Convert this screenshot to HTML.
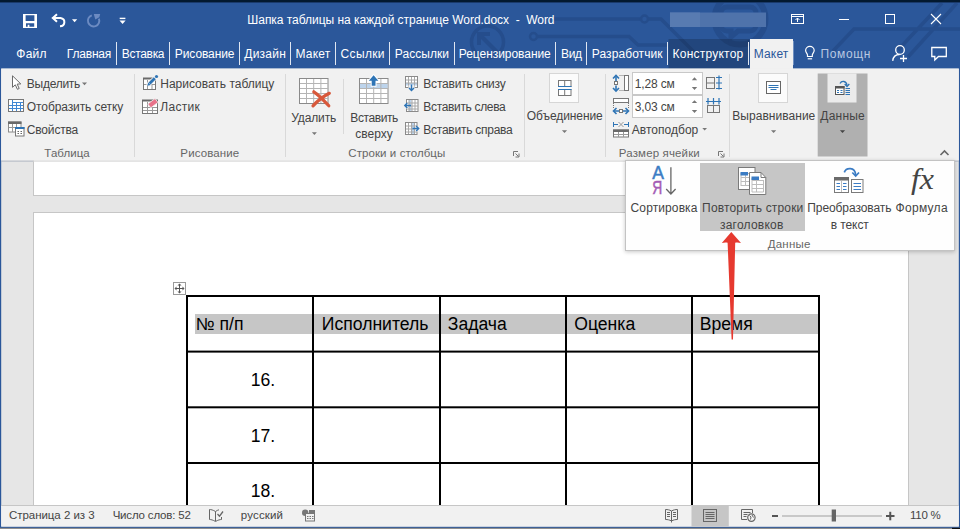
<!DOCTYPE html>
<html lang="ru"><head><meta charset="utf-8"><title>Word</title>
<style>
html,body{margin:0;padding:0;background:#2b579a;}
#w{position:relative;width:960px;height:529px;overflow:hidden;background:#2b579a;font-family:"Liberation Sans",sans-serif;}
#w svg{position:absolute;left:0;top:0;}
#panel{position:absolute;left:625px;top:160.400px;width:328px;height:89px;background:#fefefe;border:1px solid #c3c3c3;box-shadow:0 1px 4px rgba(0,0,0,0.22);}
#hl{position:absolute;left:74.400px;top:1.200px;width:104.800px;height:68px;background:#c6c6c6;}
.t{position:absolute;white-space:pre;font-size:12px;line-height:20px;}
</style></head><body>
<div id="w">
<svg width="960" height="529" viewBox="0 0 960 529">
<!-- title pattern -->
<g fill="none" stroke="#254d8c" stroke-width="3.5">
<circle cx="487.5" cy="42" r="16"/>
<path d="M497 52 L480 35 M479 45 V34 H490" stroke-width="4"/>
<path d="M554 19 H640"/><circle cx="644.5" cy="19" r="3.5" stroke-width="2.5"/>
<circle cx="533.5" cy="36.5" r="3.5" stroke-width="2.5"/><path d="M538 36.500 H629 L638 45 H668"/>
<circle cx="740" cy="19" r="25.500" stroke-width="6"/>
<path d="M727 7H750A6 6 0 0 1 756 13V25A6 6 0 0 1 750 31H738L731 37V31H727A6 6 0 0 1 721 25V13A6 6 0 0 1 727 7Z" stroke-width="5"/>
<path d="M648 19H661L699 57" stroke-width="3.500"/>
<path d="M833 51 L854 29 H960 M898 50 L942 3 M908 57 L957 3"/>
</g>
<!-- top strip -->
<rect x="0" y="0" width="960" height="2" fill="#03192f"/>
<rect x="0" y="2" width="960" height="1" fill="#1a3a6b"/>
<!-- blurred user name -->
<rect x="670" y="12.500" width="96" height="14.500" fill="#4f73ab"/><rect x="670" y="12.500" width="30" height="14.500" fill="#587bb1"/>
<!-- konstruktor tab -->
<rect x="668.500" y="39" width="81" height="30" fill="#000" fill-opacity="0.19"/>
<!-- tab separators -->
<g fill="#dfe6f1">
<rect x="116" y="42" width="1" height="23"/><rect x="169" y="42" width="1" height="23"/><rect x="239" y="42" width="1" height="23"/>
<rect x="290" y="42" width="1" height="23"/><rect x="335" y="42" width="1" height="23"/><rect x="389" y="42" width="1" height="23"/>
<rect x="454" y="42" width="1" height="23"/><rect x="555" y="42" width="1" height="23"/><rect x="586" y="42" width="1" height="23"/>
<rect x="667" y="42" width="1" height="23"/><rect x="748" y="42" width="1" height="23"/>
</g>
<!-- active tab -->
<rect x="750" y="39" width="43" height="31" fill="#f1f1f1"/><rect x="793" y="41" width="1" height="24" fill="#6f8fc0"/>
<!-- ribbon -->
<rect x="1.200" y="68.600" width="957.600" height="92" fill="#f1f1f1"/>
<rect x="1.200" y="160.600" width="957.600" height="1" fill="#d2d2d2"/>
<!-- doc -->
<rect x="1.200" y="161.600" width="957.600" height="345" fill="#e6e6e6"/>
<rect x="33.500" y="150" width="875" height="45.500" fill="#fff" stroke="#c6c6c6"/>
<rect x="33.500" y="212.500" width="875" height="300" fill="#fff" stroke="#c6c6c6"/>
<rect x="1.200" y="68.600" width="957.600" height="92" fill="#f1f1f1"/>
<rect x="1.200" y="160.600" width="957.600" height="1" fill="#d2d2d2"/>
<!-- status -->
<rect x="1.200" y="505" width="957.600" height="1" fill="#c6c6c6"/>
<rect x="1.200" y="506" width="957.600" height="20.500" fill="#f1f1f1"/>
<rect x="0" y="527.800" width="960" height="1.200" fill="#8e8e8e"/><rect x="952" y="527.800" width="8" height="1.200" fill="#111"/>
<!-- ===== table ===== -->
<g fill="#c6c6c6">
<rect x="195" y="314" width="117" height="20"/><rect x="314" y="314" width="125" height="20"/><rect x="441" y="314" width="124" height="20"/><rect x="567" y="314" width="124" height="20"/><rect x="693" y="314" width="125" height="20"/>
</g>
<g fill="#000">
<rect x="186" y="295" width="2" height="211"/><rect x="312" y="295" width="2" height="211"/><rect x="439" y="295" width="2" height="211"/><rect x="565" y="295" width="2" height="211"/><rect x="691" y="295" width="2" height="211"/><rect x="818" y="295" width="2" height="211"/>
<rect x="186" y="295" width="634" height="2"/><rect x="186" y="350.600" width="634" height="2"/><rect x="186" y="406.300" width="634" height="2"/><rect x="186" y="462" width="634" height="2"/>
</g>
<rect x="173.500" y="282.500" width="12" height="12" fill="#fff" stroke="#9a9a9a"/>
<path d="M175.500 288.500H183.500M179.500 284.500V292.500" stroke="#555" stroke-width="1" fill="none"/>
<path d="M174.500 288.500l2-2v4zM184.500 288.500l-2-2v4zM179.500 283.500l-2 2h4zM179.500 293.500l-2-2h4z" fill="#555"/>
<!-- status bar redraw over table -->
<rect x="1.200" y="505" width="957.600" height="1" fill="#c6c6c6"/>
<rect x="1.200" y="506" width="957.600" height="20.600" fill="#f1f1f1"/>
<rect x="691.500" y="506" width="37.300" height="20.600" fill="#c6c6c6"/>
<!-- ===== data button ===== -->
<rect x="817.700" y="73.500" width="49.800" height="83" fill="#b0b0b0"/>
<rect x="827.500" y="73.500" width="29" height="29" fill="#ebebeb"/>
<!-- big button boxes -->
<rect x="549.500" y="73.500" width="29" height="29" fill="#fbfbfb" stroke="#d6d6d6"/>
<rect x="758.500" y="73.500" width="29" height="29" fill="#fbfbfb" stroke="#d6d6d6"/>
<!-- inputs -->
<rect x="632.500" y="72.500" width="70" height="22" fill="#fff" stroke="#c8c8c8"/>
<rect x="632.500" y="95.500" width="70" height="22" fill="#fff" stroke="#c8c8c8"/>
<!-- group separators -->
<g fill="#d9d9d9">
<rect x="134" y="74" width="1" height="83"/><rect x="285" y="74" width="1" height="83"/><rect x="524" y="74" width="1" height="83"/><rect x="605" y="74" width="1" height="83"/><rect x="729" y="74" width="1" height="83"/>
<rect x="343" y="79" width="1" height="55"/>
</g>
<!-- ===== QAT ===== -->
<path fill="#fff" fill-rule="evenodd" d="M23 14H37V28H23Z M25.600 15.200V21H34.400V15.200Z M26 23.300V26.800H27.700V24.800H29.400V26.800H34.200V23.300Z"/>
<g fill="none" stroke="#fff" stroke-width="2" stroke-linecap="butt" stroke-linejoin="miter">
<path d="M57 14.200L52.800 18L57 21.800"/>
<path d="M53 18H60.500A4.800 4.200 0 0 1 60 26.300"/>
</g>
<path d="M72 19.200H77.200L74.600 22.200Z" fill="#fff"/>
<path d="M91.800 15.300A5.700 5.700 0 1 0 98.900 18.600" fill="none" stroke="#6c8bc2" stroke-width="1.900"/>
<path d="M93.800 13.900H100.200L99.300 17.200L95.300 19.600Z" fill="#6c8bc2"/>
<rect x="119.700" y="17.700" width="5.700" height="1.400" fill="#fff"/>
<path d="M119.500 20.600H125.600L122.550 24Z" fill="#fff"/>
<!-- window controls -->
<g fill="none" stroke="#fff" stroke-width="1">
<rect x="791.500" y="14.500" width="12" height="9"/>
<path d="M791.500 16.500H803.500M797.500 22V18M795.500 20L797.500 18L799.500 20"/>
<path d="M839 19.500H849"/>
<rect x="885.500" y="14.500" width="9" height="9"/>
<path d="M931 14L941 24M941 14L931 24" stroke-width="1.100"/>
</g>
<!-- bulb -->
<g fill="none" stroke="#fff" stroke-width="1.200">
<path d="M807.500 56.500V55C807.500 53.500 805.600 52.600 805.600 50.600A4.300 4.300 0 0 1 814.200 50.600C814.200 52.600 812.300 53.500 812.300 55V56.500Z"/>
<path d="M807.700 58.800H812.100"/>
</g>
<!-- person+ -->
<g fill="none" stroke="#fff" stroke-width="1.300">
<circle cx="900" cy="50" r="4.300"/>
<path d="M892.700 60.800C893.200 56.500 896 54.500 899.500 54.500"/>
<path d="M900 58.500H907M903.500 55V62"/>
</g>
<!-- comment -->
<path d="M931.800 47.500H946.300V56.500H938.500L934.800 60V56.500H931.800Z" fill="none" stroke="#fff" stroke-width="1.300"/>
<!-- ===== ribbon: Table group ===== -->
<path d="M12.500 75.800V87.300L15.300 84.800L17.400 89.300L19.200 88.500L17.200 84.100L20.800 83.900Z" fill="#fff" stroke="#6a6a6a" stroke-width="1"/>
<!-- view gridlines -->
<rect x="8.500" y="99.500" width="15" height="12" fill="#fff" stroke="#777"/>
<path d="M12.500 100V111M16.500 102V111M20.500 102V111M12.500 102.500H23M9 105.500H23M9 108.500H23" stroke="#3f87d3" stroke-width="1" fill="none"/>
<!-- properties -->
<rect x="8.500" y="122" width="12.500" height="10" fill="#fff" stroke="#8a8a8a"/>
<rect x="8" y="121.500" width="13.500" height="2.500" fill="#6a6a6a"/>
<path d="M12.500 124V132M16.500 124V132M9 127.500H21" stroke="#9a9a9a" fill="none"/>
<rect x="15.500" y="127.500" width="8.500" height="8.500" fill="#fff" stroke="#777"/>
<rect x="15" y="127" width="9.500" height="2" fill="#2e74b5"/>
<path d="M17.500 131.500H19M20.500 131.500H22M17.500 133.500H19M20.500 133.500H22" stroke="#666" fill="none"/>
<path d="M82 82.500H87L84.500 85.300Z" fill="#777"/>
<!-- draw table -->
<rect x="143.500" y="78.500" width="12" height="11" fill="#fff" stroke="#777"/>
<rect x="143" y="77.500" width="13" height="2" fill="#6a6a6a"/>
<path d="M147.500 80V89M152 84.500V89M144 84.500H155" stroke="#999" fill="none"/>
<path d="M147.500 85.500L156.500 76.500" stroke="#f1f1f1" stroke-width="4.500" fill="none"/>
<path d="M149.600 83.400L154.800 78.200" stroke="#2e74b5" stroke-width="2.800" fill="none"/><circle cx="156.500" cy="76.500" r="1.600" fill="#2e74b5"/>
<path d="M147.300 85.800l1-3.200l2.300 2.300z" fill="#2e74b5"/>
<!-- eraser -->
<rect x="142.500" y="100.500" width="15" height="13" fill="#fff" stroke="#777"/>
<rect x="142" y="99.500" width="16" height="2" fill="#6a6a6a"/>
<path d="M147.500 102V113M152.500 107V113M143 107.500H157M143 110.500H157" stroke="#999" fill="none"/>
<path d="M147.800 104L155 98.600L158 102.400L150.800 107.800Z" fill="#e8728a" stroke="#f1f1f1" stroke-width="0.800"/>
<!-- delete -->
<rect x="299.500" y="78.500" width="28.500" height="25" fill="#fff" stroke="#8a8a8a"/>
<path d="M306.500 79V103M313.700 79V103M320.900 79V103M300 83.500H328M300 88.500H328M300 93.500H328M300 98.500H328" stroke="#b4b4b4" fill="none"/>
<path d="M313.800 91.800C318 94.500 324 100.500 328.800 105.800M329.300 93.300C323 96.500 317.500 101 313 105.800" stroke="#d8583b" stroke-width="3.200" stroke-linecap="round" fill="none"/>
<path d="M311.900 132.300H316.900L314.400 135Z" fill="#777"/>
<!-- insert above -->
<rect x="359.500" y="78.500" width="28.500" height="25" fill="#fff" stroke="#8a8a8a"/>
<rect x="360" y="83.500" width="27.500" height="5" fill="#bdd4ec"/>
<path d="M366.500 79V103M373.700 79V103M380.900 79V103M360 83.500H388M360 88.500H388M360 93.500H388M360 98.500H388" stroke="#b4b4b4" fill="none"/>
<path d="M373.600 73.800L380.300 81.600H376.500V86.800H370.700V81.600H366.900Z" fill="#fff"/><path d="M373.600 75.200L378.400 80.700H375.500V85.800H371.700V80.700H368.800Z" fill="#2e74b5"/>
<!-- insert below (small) -->
<g fill="none">
<rect x="405.500" y="76.500" width="12" height="11" fill="#fff" stroke="#8a8a8a"/>
<rect x="406" y="83" width="11" height="2.500" fill="#bdd4ec"/>
<path d="M408.500 77V87M411.500 77V83M414.500 77V87M406 80H417M406 83H417" stroke="#a8a8a8"/>
<rect x="408.500" y="85.500" width="6" height="3" fill="#f1f1f1"/>
<path d="M411.500 84.500V90M409 88L411.500 90.500L414 88" stroke="#2e74b5" stroke-width="1.400"/>
<!-- insert left -->
<rect x="406.500" y="99.500" width="11.500" height="12" fill="#fff" stroke="#8a8a8a"/>
<rect x="409" y="100" width="2.500" height="11" fill="#bdd4ec"/>
<path d="M409 100V111M412 100V111M415 100V111M407 103H418M407 106H418M407 109H418" stroke="#a8a8a8"/>
<rect x="405" y="103" width="3" height="5.500" fill="#f1f1f1"/>
<path d="M411 105.500H404.800M407.300 103L404.800 105.500L407.300 108" stroke="#2e74b5" stroke-width="1.400"/>
<!-- insert right -->
<rect x="405.500" y="122.500" width="11.500" height="12" fill="#fff" stroke="#8a8a8a"/>
<rect x="411.500" y="123" width="2.500" height="11" fill="#bdd4ec"/>
<path d="M408.500 123V134M411.500 123V134M414.500 123V134M406 126H417M406 129H417M406 132H417" stroke="#a8a8a8"/>
<rect x="415.500" y="126" width="3" height="5.500" fill="#f1f1f1"/>
<path d="M412.500 128.500H418.700M416.200 126L418.700 128.500L416.200 131" stroke="#2e74b5" stroke-width="1.400"/>
</g>
<!-- dialog launchers -->
<g fill="none" stroke="#777" stroke-width="1">
<path d="M513.500 156V151.500H518M515.500 153.500L518.500 156.500M519 153.500V157H515.500"/>
<path d="M718.500 156V151.500H723M720.500 153.500L723.500 156.500M724 153.500V157H720.500"/>
</g>
<!-- merge icon -->
<g fill="none">
<rect x="558.500" y="80.500" width="12.500" height="6" fill="#fff" stroke="#777"/>
<rect x="558.500" y="89.500" width="12.500" height="6" fill="#fff" stroke="#777"/>
<path d="M564.700 81V86M564.700 90V95" stroke="#777"/>
<path d="M558 86.500H571.500M558 89.500H571.500" stroke="#2e74b5"/>
</g>
<path d="M561.900 130.300H567.100L564.500 133Z" fill="#777"/>
<!-- height icon -->
<g fill="none">
<path d="M616 76.500V81M616 85.500V90.500" stroke="#2e74b5" stroke-width="1.600"/>
<path d="M613 78.500L616 75.500L619 78.500M613 88L616 91L619 88" stroke="#2e74b5" stroke-width="1.600"/>
<rect x="614.500" y="81.500" width="3" height="3" stroke="#777" fill="#fff"/>
<path d="M619.500 75.500H625M619.500 90.500H625" stroke="#777" stroke-dasharray="1 1"/>
<rect x="624.500" y="75.500" width="4" height="15" fill="#fff" stroke="#777"/>
<!-- width icon -->
<rect x="613.500" y="98.500" width="15" height="4" fill="#fff" stroke="#777"/>
<path d="M613.500 103V109M628.500 103V109" stroke="#777" stroke-dasharray="1 1"/>
<path d="M614 111H619M623 111H628" stroke="#2e74b5" stroke-width="1.600"/>
<path d="M616.500 108L613.500 111L616.500 114M625.500 108L628.500 111L625.500 114" stroke="#2e74b5" stroke-width="1.600"/>
<rect x="619.500" y="109.500" width="3" height="3" stroke="#777" fill="#fff"/>
<!-- autofit -->
<path d="M613.500 122V127M628.500 122V127M613.500 124.500H618M624 124.500H628.500" stroke="#2e74b5"/>
<path d="M618.500 122L623.500 127M623.500 122L618.500 127" stroke="#999"/>
<rect x="613.500" y="130" width="15" height="7" fill="#fff" stroke="#777"/>
<rect x="613" y="129.500" width="16" height="2.500" fill="#6a6a6a"/>
<path d="M618.500 132V137M623.500 132V137M614 134.500H628" stroke="#999"/>
</g>
<!-- spinners -->
<g fill="#777">
<path d="M691.800 80.200H697.200L694.500 77.300Z"/><path d="M691.800 87H697.200L694.500 89.900Z"/>
<path d="M691.800 103.100H697.200L694.500 100.200Z"/><path d="M691.800 110H697.200L694.500 112.900Z"/>
<path d="M702.300 128H707L704.650 130.500Z"/>
</g>
<!-- distribute rows -->
<g fill="none">
<rect x="706.500" y="77.500" width="8" height="11" stroke="#777"/><path d="M707 83H714" stroke="#777"/>
<path d="M719 75.500V89.500M716 77.500H722M716 83H722M716 88.500H722" stroke="#2e74b5" stroke-width="1.200"/>
<!-- distribute cols -->
<rect x="707.500" y="105.500" width="12" height="7" stroke="#777"/><path d="M713.500 106V112" stroke="#777"/>
<path d="M706 101.500H721M708 98V104.500M713.500 98V104.500M719 98V104.500" stroke="#2e74b5" stroke-width="1.200"/>
</g>
<!-- align icon -->
<rect x="766.500" y="81.500" width="14" height="12" fill="#fff" stroke="#666"/>
<path d="M768.500 85.500H778.500M768.500 87.500H778.500M770.500 89.500H776.500" stroke="#2e74b5" fill="none"/>
<path d="M771 130.300H776.200L773.600 133Z" fill="#777"/>
<!-- data icon -->
<g fill="none">
<rect x="835.500" y="86.500" width="8.500" height="8" fill="#fff" stroke="#555"/>
<rect x="835" y="86" width="9.500" height="2.500" fill="#555"/>
<path d="M837 90.500H839M840.500 90.500H842.500M837 92.500H839M840.500 92.500H842.500" stroke="#2e74b5"/>
<path d="M845.500 88.500H850M845.500 90.500H850M845.500 92.500H850M845.500 94.500H850" stroke="#2e74b5"/>
<path d="M840 83.500C841.500 80.500 846.500 80.500 847 85.500" stroke="#2e74b5" stroke-width="1.300"/>
<path d="M844.700 84L847 86.500L849.300 84" stroke="#2e74b5" stroke-width="1.300"/>
</g>
<path d="M839.900 130.300H845.100L842.500 133Z" fill="#444"/>
<!-- collapse chevron -->
<path d="M940.500 155L944.500 151L948.500 155" fill="none" stroke="#666" stroke-width="1.600"/>

</svg>
<div id="panel"><div id="hl"></div></div>
<span class="t" style="left:247.30px;top:9.84px;color:#ffffff;letter-spacing:-0.035px">Шапка таблицы на каждой странице Word.docx  -  Word</span>
<span class="t" style="left:16.30px;top:43.84px;color:#ffffff;letter-spacing:0.245px">Файл</span>
<span class="t" style="left:66.80px;top:43.84px;color:#ffffff;letter-spacing:-0.198px">Главная</span>
<span class="t" style="left:121.80px;top:43.84px;color:#ffffff;letter-spacing:-0.310px">Вставка</span>
<span class="t" style="left:174.80px;top:43.84px;color:#ffffff;letter-spacing:-0.086px">Рисование</span>
<span class="t" style="left:244.30px;top:43.84px;color:#ffffff;letter-spacing:0.231px">Дизайн</span>
<span class="t" style="left:295.55px;top:43.84px;color:#ffffff;letter-spacing:0.195px">Макет</span>
<span class="t" style="left:340.55px;top:43.84px;color:#ffffff;letter-spacing:0.350px">Ссылки</span>
<span class="t" style="left:394.80px;top:43.84px;color:#ffffff;letter-spacing:0.056px">Рассылки</span>
<span class="t" style="left:458.80px;top:43.84px;color:#ffffff;letter-spacing:-0.052px">Рецензирование</span>
<span class="t" style="left:561.05px;top:43.84px;color:#ffffff;letter-spacing:-0.359px">Вид</span>
<span class="t" style="left:591.80px;top:43.84px;color:#ffffff;letter-spacing:0.077px">Разработчик</span>
<span class="t" style="left:672.55px;top:43.84px;color:#ffffff;letter-spacing:0.233px">Конструктор</span>
<span class="t" style="left:753.80px;top:43.84px;color:#2b579a;letter-spacing:0.133px">Макет</span>
<span class="t" style="left:820.55px;top:43.84px;color:#b9c8e2;letter-spacing:0.600px">Помощн</span>
<span class="t" style="left:26.80px;top:73.84px;color:#444444;letter-spacing:-0.266px">Выделить</span>
<span class="t" style="left:26.80px;top:96.84px;color:#444444;letter-spacing:-0.094px">Отобразить сетку</span>
<span class="t" style="left:26.80px;top:119.84px;color:#444444;letter-spacing:-0.172px">Свойства</span>
<span class="t" style="left:44.33px;top:143.02px;color:#666666;letter-spacing:0.057px;font-size:11.5px">Таблица</span>
<span class="t" style="left:160.30px;top:73.84px;color:#444444;letter-spacing:-0.013px">Нарисовать таблицу</span>
<span class="t" style="left:160.30px;top:96.84px;color:#444444;letter-spacing:0.300px">Ластик</span>
<span class="t" style="left:180.33px;top:143.02px;color:#666666;letter-spacing:0.127px;font-size:11.5px">Рисование</span>
<span class="t" style="left:291.30px;top:107.84px;color:#444444;letter-spacing:-0.138px">Удалить</span>
<span class="t" style="left:350.30px;top:107.84px;color:#444444;letter-spacing:-0.411px">Вставить</span>
<span class="t" style="left:355.30px;top:124.34px;color:#444444;letter-spacing:0.009px">сверху</span>
<span class="t" style="left:423.30px;top:73.84px;color:#444444;letter-spacing:-0.185px">Вставить снизу</span>
<span class="t" style="left:423.30px;top:96.84px;color:#444444;letter-spacing:-0.331px">Вставить слева</span>
<span class="t" style="left:423.30px;top:119.84px;color:#444444;letter-spacing:-0.248px">Вставить справа</span>
<span class="t" style="left:348.33px;top:143.02px;color:#666666;letter-spacing:0.074px;font-size:11.5px">Строки и столбцы</span>
<span class="t" style="left:526.80px;top:106.34px;color:#444444;letter-spacing:-0.073px">Объединение</span>
<span class="t" style="left:634.80px;top:73.84px;color:#444444;letter-spacing:-0.159px">1,28 см</span>
<span class="t" style="left:634.80px;top:96.84px;color:#444444;letter-spacing:-0.159px">3,03 см</span>
<span class="t" style="left:631.80px;top:119.84px;color:#444444;letter-spacing:0.024px">Автоподбор</span>
<span class="t" style="left:618.83px;top:143.02px;color:#666666;letter-spacing:0.143px;font-size:11.5px">Размер ячейки</span>
<span class="t" style="left:732.30px;top:106.34px;color:#444444;letter-spacing:0.036px">Выравнивание</span>
<span class="t" style="left:820.30px;top:106.34px;color:#444444;letter-spacing:0.228px">Данные</span>
<span class="t" style="left:630.60px;top:198.34px;color:#444444;letter-spacing:0.105px">Сортировка</span>
<span class="t" style="left:702.10px;top:198.34px;color:#444444;letter-spacing:0.166px">Повторить строки</span>
<span class="t" style="left:719.90px;top:214.84px;color:#444444;letter-spacing:0.241px">заголовков</span>
<span class="t" style="left:807.30px;top:198.34px;color:#444444;letter-spacing:-0.089px">Преобразовать</span>
<span class="t" style="left:830.70px;top:214.84px;color:#444444;letter-spacing:-0.087px">в текст</span>
<span class="t" style="left:895.60px;top:198.34px;color:#444444;letter-spacing:0.286px">Формула</span>
<span class="t" style="left:767.73px;top:233.52px;color:#666666;letter-spacing:0.235px;font-size:11.5px">Данные</span>
<span class="t" style="left:8.93px;top:505.02px;color:#444444;letter-spacing:-0.040px;font-size:11.5px">Страница 2 из 3</span>
<span class="t" style="left:112.63px;top:505.02px;color:#444444;letter-spacing:-0.170px;font-size:11.5px">Число слов: 52</span>
<span class="t" style="left:240.83px;top:505.02px;color:#444444;letter-spacing:0.143px;font-size:11.5px">русский</span>
<span class="t" style="left:909.93px;top:505.02px;color:#444444;letter-spacing:-0.232px;font-size:11.5px">110 %</span>
<span class="t" style="left:195.77px;top:313.90px;color:#000000;letter-spacing:0.000px;font-size:17.6px;line-height:20px">№ п/п</span>
<span class="t" style="left:321.77px;top:313.90px;color:#000000;letter-spacing:0.000px;font-size:17.6px;line-height:20px">Исполнитель</span>
<span class="t" style="left:447.77px;top:313.90px;color:#000000;letter-spacing:0.000px;font-size:17.6px;line-height:20px">Задача</span>
<span class="t" style="left:574.27px;top:313.90px;color:#000000;letter-spacing:0.000px;font-size:17.6px;line-height:20px">Оценка</span>
<span class="t" style="left:699.77px;top:313.90px;color:#000000;letter-spacing:0.000px;font-size:17.6px;line-height:20px">Время</span>
<span class="t" style="left:250.77px;top:370.20px;color:#000000;letter-spacing:0.000px;font-size:17.6px;line-height:20px">16.</span>
<span class="t" style="left:250.77px;top:425.60px;color:#000000;letter-spacing:0.000px;font-size:17.6px;line-height:20px">17.</span>
<span class="t" style="left:250.77px;top:480.90px;color:#000000;letter-spacing:0.000px;font-size:17.6px;line-height:20px">18.</span>
<svg width="960" height="529" viewBox="0 0 960 529">
<!-- ===== dropdown icons ===== -->
<text x="652.200" y="178.700" font-family="Liberation Sans, sans-serif" font-size="17.500" fill="#3b7cc4" stroke="#3b7cc4" stroke-width="0.500">А</text>
<text x="652.300" y="193.900" font-family="Liberation Sans, sans-serif" font-size="17.500" fill="#a45bb5" stroke="#a45bb5" stroke-width="0.500" textLength="10" lengthAdjust="spacingAndGlyphs">Я</text>
<path d="M670.900 167.300V193.800M666.200 189L670.900 194L675.600 189" fill="none" stroke="#666" stroke-width="1.300"/>
<!-- repeat header rows -->
<g>
<rect x="738.500" y="167.500" width="16.500" height="22" fill="#fff" stroke="#7a7a7a"/>
<path d="M741 173.500H753M741 177.500H753M741 181.500H753M741 185.500H753M745.500 173V186M741 173V186" stroke="#bdbdbd" fill="none"/>
<rect x="740.500" y="172" width="7.500" height="3.500" fill="#3b7cc4"/>
<path d="M749.500 172.500H761L765.800 177.500V194.500H749.500Z" fill="#fff" stroke="#7a7a7a"/>
<path d="M761 172.500V177.500H765.800" fill="none" stroke="#7a7a7a"/>
<path d="M752 180.500H763.500M752 184.500H763.500M752 188.500H763.500M752 192H763.500M756.500 180V192M752 178V192M763.500 180V192" stroke="#bdbdbd" fill="none"/>
<rect x="751.500" y="176.500" width="7.500" height="3.500" fill="#3b7cc4"/>
</g>
<!-- convert to text -->
<g fill="none">
<rect x="834.500" y="177.500" width="14" height="15" fill="#fff" stroke="#7a7a7a"/>
<rect x="834" y="177" width="15" height="3.500" fill="#6a6a6a"/>
<path d="M841.500 181V192" stroke="#bdbdbd"/>
<path d="M836.500 183.500H840M843 183.500H846.500M836.500 186.500H840M843 186.500H846.500M836.500 189.500H840M843 189.500H846.500" stroke="#3b7cc4" stroke-width="1.200"/>
<rect x="851.500" y="179.500" width="11.500" height="13" fill="#fff" stroke="#7a7a7a"/>
<path d="M853.500 183.500H861M853.500 186.500H861M853.500 189.500H861" stroke="#3b7cc4" stroke-width="1.200"/>
<path d="M844.300 172.400C846 167.500 855 166.500 855.700 175" stroke="#3b7cc4" stroke-width="1.700"/>
<path d="M852.300 172.500L855.700 176L859 172.500" stroke="#3b7cc4" stroke-width="1.700"/>
</g>
<text x="911" y="189" font-family="Liberation Serif, serif" font-style="italic" font-size="29" fill="#444" textLength="23" lengthAdjust="spacingAndGlyphs">fx</text>
<!-- ===== status icons ===== -->
<g fill="none" stroke="#666" stroke-width="1">
<path d="M215.500 511.500C213 510 211 509.500 209.500 509.500V519.500C211 519.500 213 520 215.500 521.500C218 520 220 519.500 221.500 519.500V517"/>
<path d="M215.500 511.500V521M215.500 511.500C217 510.500 218 510 219 509.800"/>
<path d="M217.500 514L219.500 516.200L223 511.500" stroke-width="1.300"/>
</g>
<circle cx="305.200" cy="512.700" r="3.200" fill="#777"/>
<rect x="305.500" y="513.500" width="9" height="7.500" fill="#f1f1f1" stroke="#777"/>
<rect x="309" y="510" width="6" height="3.500" fill="#777"/>
<path d="M307 516.500H313.500M307 518.500H313.500" stroke="#777" stroke-dasharray="1.500 1" fill="none"/>
<!-- read mode -->
<g fill="none" stroke="#666">
<path d="M671.500 511C669.500 509.800 667.500 509.500 665.500 509.500V519.500C667.500 519.500 669.500 519.800 671.500 521C673.500 519.800 675.500 519.500 677.500 519.500V509.500C675.500 509.500 673.500 509.800 671.500 511Z"/>
<path d="M671.500 511V522.500M667 512.500H670M667 514.500H670M667 516.500H670M673 512.500H676M673 514.500H676M673 516.500H676"/>
</g>
<!-- print layout -->
<rect x="703.500" y="509.500" width="13" height="12" fill="none" stroke="#666"/>
<path d="M705.500 512.500H714.500M705.500 514.500H714.500M705.500 516.500H714.500M705.500 518.500H714.500" stroke="#666" fill="none"/>
<!-- web layout -->
<path d="M747 519.500H741.500V509.500H752.500V513" fill="none" stroke="#666"/>
<path d="M743.500 512.500H750.500M743.500 514.500H747.500M743.500 516.500H746.500" stroke="#666" fill="none"/>
<circle cx="751.400" cy="517.600" r="3.700" fill="#f1f1f1" stroke="#666" stroke-width="1.200"/>
<path d="M749.500 515.500L751 517L750.500 519.500M752 515L753.500 517.500" stroke="#666" fill="none"/>
<!-- zoom slider -->
<rect x="772" y="515" width="6" height="2" fill="#555"/>
<rect x="782" y="515.500" width="100" height="1" fill="#a0a0a0"/>
<rect x="831.700" y="509.500" width="4.300" height="12" fill="#666"/>
<rect x="886" y="515" width="8.500" height="2" fill="#555"/>
<rect x="889.250" y="511.800" width="2" height="8.500" fill="#555"/>

<path d="M731.300 232L741 243C738.500 242.300 736.500 242.300 735.200 242.800L733 339.500L731.600 339.500L727.600 242.800C726 242.300 724 242.500 721.800 243Z" fill="#e6392f"/>

</svg>
</div>
</body></html>
